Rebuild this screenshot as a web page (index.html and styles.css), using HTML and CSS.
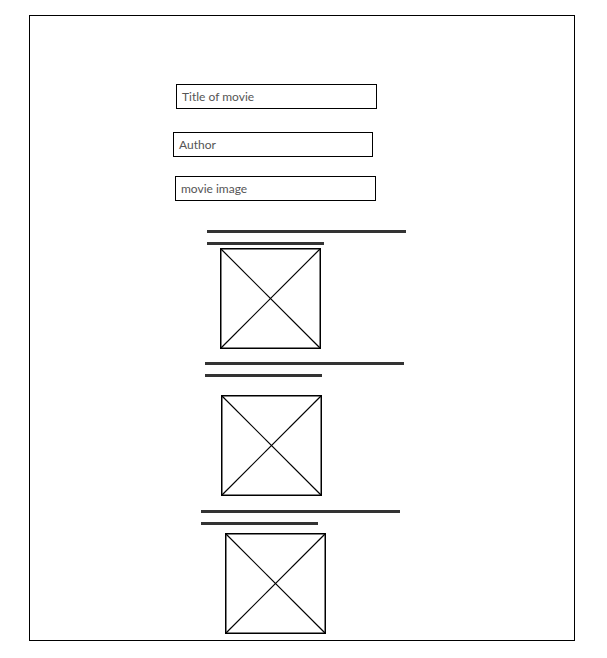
FILE: index.html
```html
<!DOCTYPE html>
<html lang="en">
<head>
    <meta charset="UTF-8">
    <meta name="viewport" content="width=device-width, initial-scale=1.0">
    <title>Movies - Wireframe</title>
    <link rel="stylesheet" href="styles.css">
</head>
<body>
    <div class="frame">
        <div class="field field-title">Title of movie</div>
        <div class="field field-author">Author</div>
        <div class="field field-image">movie image</div>

        <div class="movie movie-1">
            <div class="line line-long"></div>
            <div class="line line-short"></div>
            <svg class="thumb" width="101" height="101" viewBox="0 0 101 101">
                <rect x="0.75" y="0.75" width="99.5" height="99.5" fill="none" stroke="#000" stroke-width="1.5"/>
                <line x1="1" y1="1" x2="100" y2="100" stroke="#000" stroke-width="1.2"/>
                <line x1="100" y1="1" x2="1" y2="100" stroke="#000" stroke-width="1.2"/>
            </svg>
        </div>

        <div class="movie movie-2">
            <div class="line line-long"></div>
            <div class="line line-short"></div>
            <svg class="thumb" width="101" height="101" viewBox="0 0 101 101">
                <rect x="0.75" y="0.75" width="99.5" height="99.5" fill="none" stroke="#000" stroke-width="1.5"/>
                <line x1="1" y1="1" x2="100" y2="100" stroke="#000" stroke-width="1.2"/>
                <line x1="100" y1="1" x2="1" y2="100" stroke="#000" stroke-width="1.2"/>
            </svg>
        </div>

        <div class="movie movie-3">
            <div class="line line-long"></div>
            <div class="line line-short"></div>
            <svg class="thumb" width="101" height="101" viewBox="0 0 101 101">
                <rect x="0.75" y="0.75" width="99.5" height="99.5" fill="none" stroke="#000" stroke-width="1.5"/>
                <line x1="1" y1="1" x2="100" y2="100" stroke="#000" stroke-width="1.2"/>
                <line x1="100" y1="1" x2="1" y2="100" stroke="#000" stroke-width="1.2"/>
            </svg>
        </div>
    </div>
</body>
</html>
```

FILE: styles.css
```css
body {
    margin: 0;
    background-color: #fff;
    font-family: Lato, 'Open Sans', sans-serif;
}
.frame {
    box-sizing: border-box;
    width: 546px;
    height: 626px;
    margin: 15px 0 0 29px;
    border: 1px solid #000;
    overflow: hidden;
}
.field {
    box-sizing: border-box;
    width: 201px;
    height: 25px;
    padding: 0 5px;
    border: 1px solid #000;
    font-size: 12px;
    line-height: 23px;
    color: #555;
}
.field-title {
    margin: 68px 0 0 146px;
}
.field-author {
    width: 200px;
    margin: 23px 0 0 143px;
}
.field-image {
    margin: 19px 0 0 145px;
}
.movie .line {
    height: 3px;
    background-color: #333;
}
.line-long {
    width: 199px;
}
.line-short {
    width: 117px;
    margin-top: 9px;
}
.thumb {
    display: block;
}
.movie-1 {
    margin: 29px 0 0 177px;
}
.movie-1 .thumb {
    margin: 3px 0 0 13px;
}
.movie-2 {
    margin: 13px 0 0 175px;
}
.movie-2 .thumb {
    margin: 18px 0 0 16px;
}
.movie-3 {
    margin: 14px 0 0 171px;
}
.movie-3 .thumb {
    margin: 8px 0 0 24px;
}
```
